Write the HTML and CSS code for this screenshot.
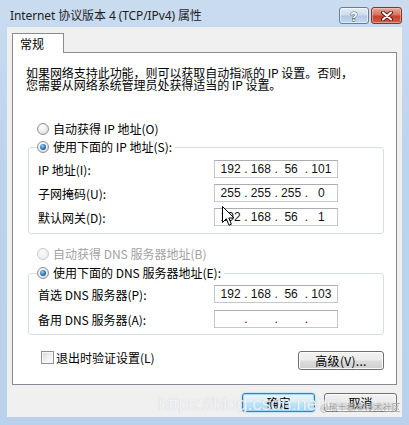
FILE: index.html
```html
<!DOCTYPE html>
<html lang="zh-CN">
<head>
<meta charset="utf-8">
<title>Internet 协议版本 4 (TCP/IPv4) 属性</title>
<link rel="stylesheet" href="styles.css">
</head>
<body>
<div class="window">
  <div class="titlebar">
    <span class="title">Internet 协议版本 4 (TCP/IPv4) 属性</span>
    <div class="caption-btns">
      <span class="cbtn help"><svg width="12" height="12" viewBox="0 0 12 12"><text x="6" y="10.5" text-anchor="middle" font-family="Liberation Sans, sans-serif" font-weight="bold" font-size="12" fill="#fff" stroke="#3b4a5e" stroke-width="0.9" paint-order="stroke">?</text></svg></span>
      <span class="cbtn close"><svg width="14" height="10" viewBox="0 0 14 10"><path d="M3 1.5 L11 8.5 M11 1.5 L3 8.5" stroke="#5a1e18" stroke-width="4" stroke-linecap="round"/><path d="M3 1.5 L11 8.5 M11 1.5 L3 8.5" stroke="#fff" stroke-width="2" stroke-linecap="round"/></svg></span>
    </div>
  </div>
  <div class="client">
    <div class="tabs"><div class="tab">常规</div></div>
    <div class="panel">
      <p class="desc">如果网络支持此功能，则可以获取自动指派的 IP 设置。否则，<br>您需要从网络系统管理员处获得适当的 IP 设置。</p>

      <div class="opt opt-first"><span class="radio"></span>自动获得 IP 地址(O)</div>

      <fieldset class="group group-ip">
        <legend class="opt"><span class="radio checked"></span>使用下面的 IP 地址(S):</legend>
        <div class="field"><span class="lbl">IP 地址(I):</span>
          <div class="ip"><span>192</span><i>.</i><span>168</span><i>.</i><span>56</span><i>.</i><span>101</span></div></div>
        <div class="field"><span class="lbl">子网掩码(U):</span>
          <div class="ip"><span>255</span><i>.</i><span>255</span><i>.</i><span>255</span><i>.</i><span>0</span></div></div>
        <div class="field"><span class="lbl">默认网关(D):</span>
          <div class="ip"><span>192</span><i>.</i><span>168</span><i>.</i><span>56</span><i>.</i><span>1</span></div></div>
      </fieldset>

      <div class="opt opt-dns disabled"><span class="radio dis"></span>自动获得 DNS 服务器地址(B)</div>

      <fieldset class="group group-dns">
        <legend class="opt"><span class="radio checked"></span>使用下面的 DNS 服务器地址(E):</legend>
        <div class="field"><span class="lbl">首选 DNS 服务器(P):</span>
          <div class="ip"><span>192</span><i>.</i><span>168</span><i>.</i><span>56</span><i>.</i><span>103</span></div></div>
        <div class="field"><span class="lbl">备用 DNS 服务器(A):</span>
          <div class="ip"><span></span><i>.</i><span></span><i>.</i><span></span><i>.</i><span></span></div></div>
      </fieldset>

      <div class="bottom-row">
        <label class="check"><span class="box"></span>退出时验证设置(L)</label>
        <button class="btn adv">高级(V)...</button>
      </div>
    </div>
    <div class="actions">
      <button class="btn default">确定</button>
      <button class="btn">取消</button>
    </div>
  </div>

  <span class="wm-url">https://blog.csdn.net/C</span>
  <span class="wm-brand">@稀土掘金技术社区</span>
  <svg class="cursor" width="13" height="21" viewBox="0 0 13 21"><path d="M0.5 0.5 L0.5 16.5 L4.3 12.8 L7 19.2 L9.4 18.2 L6.8 12 L12 12 Z" fill="#fff" stroke="#000" stroke-width="1" stroke-linejoin="miter"/></svg>
</div>
</body>
</html>
```

FILE: styles.css
```css
* { box-sizing: border-box; }

html, body {
  margin: 0;
  padding: 0;
}

body {
  width: 409px;
  height: 425px;
  overflow: hidden;
  background: #bfd5ed;
  font-family: "Noto Sans CJK SC", sans-serif;
  font-size: 12px;
  color: #000;
}

.window {
  position: relative;
  width: 409px;
  height: 425px;
  background: linear-gradient(180deg, #c9dcf0 0%, #bcd3ec 40%, #b9d1ea 100%);
}

.titlebar {
  height: 27px;
  display: flex;
  align-items: flex-start;
  justify-content: space-between;
  padding: 0 7px 0 10px;
}

.title {
  font-family: "Noto Sans", "Noto Sans CJK SC", sans-serif;
  font-size: 12px;
  line-height: 16px;
  margin-top: 8px;
  color: #1e1e1e;
  letter-spacing: -0.1px;
}

.caption-btns {
  display: flex;
  gap: 2px;
  margin-top: 7px;
}

.cbtn {
  width: 31px;
  height: 17px;
  border-radius: 3px;
  display: flex;
  align-items: center;
  justify-content: center;
}

.help {
  width: 30px;
  border: 1px solid #6a7d96;
  background: linear-gradient(180deg, #e4edf7 0%, #cddcee 45%, #b3c9e3 55%, #c5d8ee 100%);
  box-shadow: inset 0 0 0 1px rgba(255,255,255,0.55);
}

.close {
  border: 1px solid #8a3228;
  background: linear-gradient(180deg, #e9a99b 0%, #d8735f 45%, #c4412d 55%, #d2624a 100%);
  box-shadow: inset 0 0 0 1px rgba(255,220,210,0.45);
}

.client {
  margin: 0 7px;
  height: 390px;
  background: #f0f0f0;
  padding: 6px 5px 0 5px;
}

.tabs {
  display: flex;
  height: 19px;
}

.tab {
  position: relative;
  z-index: 1;
  width: 52px;
  height: 20px;
  background: #fff;
  border: 1px solid #898c95;
  border-bottom: none;
  padding-left: 7px;
  line-height: 20px;
  font-size: 12px;
}

.panel {
  width: 385px;
  height: 333px;
  background: #fff;
  border: 1px solid #898c95;
}

.desc {
  margin: 0;
  padding: 14px 0 0 13px;
  font-size: 12px;
  line-height: 12px;
  white-space: nowrap;
  letter-spacing: -0.05px;
}

.opt {
  display: flex;
  align-items: center;
  height: 16px;
  line-height: 16px;
  white-space: nowrap;
}

.opt-first {
  margin: 30px 0 0 24px;
}

.opt-dns {
  margin: 12px 0 0 24px;
}

.disabled {
  color: #a2a2a2;
}

.radio {
  width: 12px;
  height: 12px;
  border-radius: 50%;
  border: 1px solid #8f9194;
  background: radial-gradient(circle at 40% 35%, #ffffff 0%, #ececec 50%, #cfcfcf 100%);
  margin-right: 4px;
  flex: none;
  display: flex;
  align-items: center;
  justify-content: center;
}

.radio.checked::after {
  content: "";
  width: 6px;
  height: 6px;
  border-radius: 50%;
  background: radial-gradient(circle at 40% 35%, #9fd4f7 0%, #2f7bbd 50%, #0d3e6c 100%);
}

.radio.dis {
  border-color: #c8c9cb;
  background: radial-gradient(circle at 40% 35%, #fafafa 0%, #f0f0f0 60%, #e2e2e2 100%);
}

.group {
  margin: 0;
  padding: 0 0 7px 0;
  border: 1px solid #d5dfe5;
  border-radius: 3px;
  width: 356px;
  margin-left: 15px;
  min-width: 0;
}

.group-ip {
  margin-top: 2px;
}

.group-dns {
  margin-top: 3px;
  padding-bottom: 6px;
}

.group legend {
  margin-left: 8px;
  padding: 0 3px 0 0;
}

.field {
  display: flex;
  align-items: center;
  height: 18px;
  padding-left: 9px;
}

.group-ip .field { margin-top: 6px; }
.group-ip .field:first-of-type { margin-top: 5px; }
.group-dns .field { margin-top: 7px; }
.group-dns .field:first-of-type { margin-top: 4px; }

.lbl {
  width: 176px;
  flex: none;
  white-space: nowrap;
}

.ip {
  width: 124px;
  height: 18px;
  border: 1px solid #c3c8cf;
  border-top-color: #abadb3;
  display: flex;
  align-items: center;
  padding: 0 2px;
  font-family: "Liberation Sans", Arial, sans-serif;
  font-size: 12px;
  color: #111;
}

.ip span {
  flex: 1;
  text-align: center;
  line-height: 16px;
}

.ip i {
  font-style: normal;
  width: 3px;
  text-align: center;
  line-height: 16px;
}

.bottom-row {
  display: flex;
  justify-content: space-between;
  align-items: flex-start;
  width: 356px;
  margin: 14px 0 0 15px;
}

.check {
  display: flex;
  align-items: center;
  height: 16px;
  padding-left: 13px;
  white-space: nowrap;
}

.box {
  width: 13px;
  height: 13px;
  border: 1px solid #8f9194;
  background: linear-gradient(135deg, #d9d9d9 0%, #f2f2f2 60%, #ffffff 100%);
  box-shadow: inset 0 0 0 1px #f6f6f6;
  margin-right: 2px;
}

.btn {
  font-family: "Noto Sans CJK SC", sans-serif;
  font-size: 12px;
  color: #000;
  height: 19px;
  padding: 0;
  line-height: 17px;
  border: 1px solid #707070;
  border-radius: 3px;
  background: linear-gradient(180deg, #f2f2f2 0%, #ebebeb 48%, #dddddd 52%, #cfcfcf 100%);
  box-shadow: inset 0 0 0 1px #fcfcfc;
}

.adv {
  width: 86px;
  margin-top: 2px;
  letter-spacing: 0.3px;
}

.actions {
  display: flex;
  justify-content: flex-end;
  gap: 9px;
  margin-top: 8px;
}

.actions .btn {
  width: 73px;
}

.btn.default {
  border-color: #3c7fb1;
  background: linear-gradient(180deg, #e8f5fc 0%, #d9f0fc 48%, #bee6fd 52%, #a7d9f5 100%);
  box-shadow: inset 0 0 0 1px #9fd8f8, 0 0 2px #6cc3f2;
}

.wm-url {
  position: absolute;
  left: 158px;
  top: 393px;
  font-family: "Liberation Sans", Arial, sans-serif;
  font-size: 19px;
  line-height: 22px;
  color: rgba(255,255,255,0.78);
  text-shadow: 0 0 1px rgba(150,160,175,0.55);
  pointer-events: none;
  white-space: nowrap;
  letter-spacing: -0.3px;
}

.wm-brand {
  position: absolute;
  left: 320px;
  top: 402px;
  font-size: 9px;
  line-height: 12px;
  color: rgba(120,120,120,0.7);
  text-shadow: 0 0 1px #fff;
  pointer-events: none;
  white-space: nowrap;
}

.cursor {
  position: absolute;
  left: 222px;
  top: 206px;
}
```
